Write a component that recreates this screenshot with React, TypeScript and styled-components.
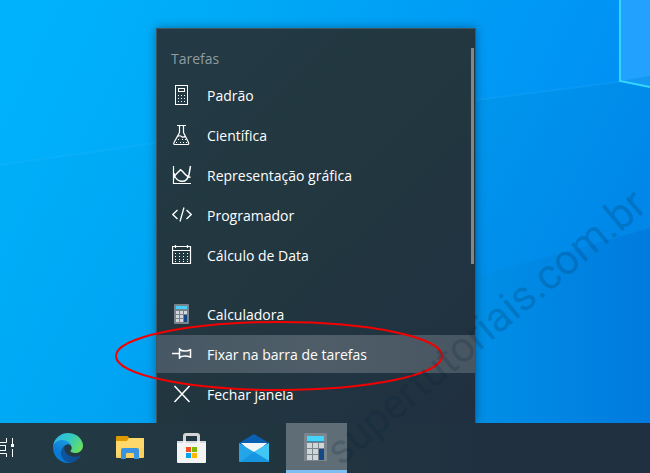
import React from 'react';
import styled, { createGlobalStyle } from 'styled-components';

const GlobalStyle = createGlobalStyle`
  * { box-sizing: border-box; }
  body { margin: 0; overflow: hidden; font-family: "Open Sans", "Noto Sans", sans-serif; }
  ul { list-style: none; margin: 0; padding: 0; }
  svg { display: block; flex: none; }
`;

const Desktop = styled.div`
  position: relative;
  display: flex;
  flex-direction: column;
  min-height: 100vh;
  background: #0093ea;
`;

const Wallpaper = styled.main`
  flex: 1;
  position: relative;
  min-height: 400px;

  > svg {
    position: absolute;
    inset: 0;
    width: 100%;
    height: 100%;
  }
`;

const Taskbar = styled.nav`
  position: relative;
  display: flex;
  gap: 1px;
  height: 50px;
  background: linear-gradient(90deg, #233a45 0%, #21353f 45%, #203040 75%, #202f41 100%);
`;

const TaskSlot = styled.div`
  position: relative;
  display: flex;
`;

const TaskButton = styled.button<{ $active?: boolean; $clipped?: boolean }>`
  display: flex;
  align-items: center;
  justify-content: ${(p) => (p.$clipped ? 'flex-start' : 'center')};
  width: ${(p) => (p.$clipped ? 37 : 61)}px;
  padding: 0 1px 0 0;
  border: 0;
  background: ${(p) => (p.$active ? '#5f6d76' : 'transparent')};
  box-shadow: ${(p) => (p.$active ? 'inset 0 -3px #7dbdf1' : 'none')};
`;

const JumpList = styled.section`
  position: absolute;
  left: -130px;
  bottom: 100%;
  width: 320px;
  padding: 11px 0 10px;
`;

const Panel = styled.div`
  position: absolute;
  inset: 0;
  border: 1px solid #3d5863;
  border-bottom: 0;
  background: linear-gradient(135deg, #233a45 0%, #22373f 45%, #213441 75%, #202f40 100%);
  box-shadow: 0 0 9px rgba(0, 30, 60, 0.45);
  clip-path: inset(-16px -16px 0 -16px);
`;

const Content = styled.div`
  position: relative;
  margin: 1px 1px 0;
`;

const Heading = styled.h2`
  margin: 0;
  padding: 9px 14px 7px;
  font-size: 14px;
  line-height: 20px;
  font-weight: 400;
  color: #8f9ba1;
`;

const Items = styled.ul`
  display: grid;
  gap: 2px;

  & + & { margin-top: 21px; }
`;

const Item = styled.button<{ $hover?: boolean }>`
  display: flex;
  align-items: center;
  gap: 15px;
  width: 100%;
  height: 38px;
  padding: 0 15px;
  border: 0;
  background: ${(p) => (p.$hover ? 'linear-gradient(90deg, #475864, #4e5d67 50%, #485662)' : 'transparent')};
  color: #fff;
  font: 400 14px/20px "Open Sans", "Noto Sans", sans-serif;
  text-align: left;
`;

const Label = styled.span`
  padding-top: 2px;
`;

const Scrollbar = styled.div`
  position: absolute;
  top: 20px;
  right: 2px;
  width: 3px;
  height: 216px;
  background: #858688;
`;

const Highlight = styled.svg`
  position: absolute;
  left: -41px;
  bottom: 31px;
  pointer-events: none;
`;

const Watermark = styled.div`
  position: absolute;
  right: -37px;
  bottom: 121px;
  font: 400 42px/50px Roboto, sans-serif;
  white-space: nowrap;
  color: rgba(0, 35, 60, 0.21);
  transform: rotate(-40deg);
  pointer-events: none;
`;

const dots = (xs: number[], ys: number[]) =>
  ys.flatMap((y) => xs.map((x) => <rect key={`${x}-${y}`} x={x} y={y} width="1" height="1" fill="#fff" />));

const Line = ({ children }: { children: React.ReactNode }) => (
  <svg width="20" height="20" viewBox="0 0 20 20" fill="none" stroke="#fff" aria-hidden="true">{children}</svg>
);

const StandardIcon = () => (
  <Line>
    <rect x="3.5" y=".5" width="12" height="19" />
    <rect x="6.5" y="3.5" width="6" height="3" />
    <g stroke="none">{dots([6, 9, 12], [10, 13, 16])}</g>
  </Line>
);

const FlaskIcon = () => (
  <Line>
    <path d="M5 .5h9M7.500 .5v7L2 17.500q-.8 2 1 2h12.500q1.800 0 1-2L11.500 7.500V.5M5.500 11.500q2.500-1.500 4 0t4-.5" strokeWidth="1.200" />
    <g stroke="none">{dots([6, 10, 13], [14])}{dots([4, 8, 11, 14], [17])}</g>
  </Line>
);

const GraphIcon = () => (
  <Line>
    <path d="M1.500 1v17.500H19" strokeWidth="1.200" />
    <path d="M2 8C3 17.500 14.500 20 17 9.500L18.500 1" strokeWidth="1.500" />
    <path d="M2 13C3 8.500 6 8 8.500 4.700C11 5.500 13.500 12 18.500 12.300" strokeWidth="1.500" />
  </Line>
);

const CodeIcon = () => (
  <Line>
    <path d="M5.500 5 .8 9.500l4.700 4.500M14.500 5l4.700 4.500-4.700 4.500M12 2.500 8 16.500" strokeWidth="1.300" />
  </Line>
);

const CalendarIcon = () => (
  <Line>
    <path d="M.5 1.500h18v17H.5zM.5 5.500h18M3.500 0v3M15.500 0v3" strokeWidth="1.200" />
    <g stroke="none">{dots([3, 7, 11, 15], [8, 11, 14, 16])}</g>
  </Line>
);

const PinIcon = () => (
  <Line>
    <path d="M0 9.500h7M7.500 4v11M7.500 5.500q4 2.500 11 .5v7q-7-2-11 .5M18.500 5v9" strokeWidth="1.500" />
  </Line>
);

const CloseIcon = () => (
  <Line><path d="m2.500 2 15 16m0-16-15 16" strokeWidth="1.500" /></Line>
);

const CalculatorIcon = () => (
  <svg width="24" height="30" viewBox="0 0 24 30" aria-hidden="true">
    <rect width="23" height="30" rx="1.500" fill="#7b858d" />
    <rect y="28" width="23" height="2" rx="1" fill="#606b74" />
    <rect x="3" y="3" width="17" height="5" fill="#45d4fa" />
    <path d="M3 8.500h17" stroke="#348ab0" />
    {[10, 16, 22].flatMap((y) => [3, 9, 15].map((x) => (
      <rect key={`${x}-${y}`} x={x} y={y} width="5" height="5" fill="#d0d5d8" />
    )))}
    <path d="M15 16h5v11h-5z" fill="#124886" />
  </svg>
);

const SmallCalculator = () => (
  <svg width="20" height="20" viewBox="0 0 20 20" aria-hidden="true">
    <rect x="2" width="15" height="20" rx="1" fill="#78838c" />
    <rect x="4" y="2" width="11" height="3" fill="#43d0fa" />
    {[7, 11, 15].flatMap((y) => [4, 8, 12].map((x) => (
      <rect key={`${x}-${y}`} x={x} y={y} width="3" height="3" fill="#d3d8dc" />
    )))}
    <path d="M12 11h3v7h-3z" fill="#124886" />
  </svg>
);

const TaskViewIcon = () => (
  <svg width="14" height="22" viewBox="0 0 14 22" fill="none" stroke="#fff" aria-hidden="true">
    <path d="M0 5.500h6.500V1M0 16.500h6.500V20M5.500 8v6M0 8.500h5.500M0 13.500h5.500M12.500 1v6M12.500 12v8" />
    <rect x="11" y="7" width="3" height="3" fill="#fff" stroke="none" />
  </svg>
);

const EdgeIcon = () => (
  <svg width="30" height="30" viewBox="0 0 256 256" aria-hidden="true">
    <defs>
      <linearGradient id="eb" x1="0" y1="0" x2="1" y2="0">
        <stop offset="0" stopColor="#0c59a4" /><stop offset="1" stopColor="#114a8b" />
      </linearGradient>
      <linearGradient id="em" x1=".7" y1="0" x2=".2" y2="1">
        <stop offset="0" stopColor="#1b9de2" /><stop offset=".6" stopColor="#0d7bd4" /><stop offset="1" stopColor="#0078d7" />
      </linearGradient>
      <linearGradient id="eg" x1="0" y1=".2" x2="1" y2=".7">
        <stop offset="0" stopColor="#2bb6f0" /><stop offset=".5" stopColor="#35c9bd" /><stop offset="1" stopColor="#6be05c" />
      </linearGradient>
    </defs>
    <path d="M231 190.500a94 94 0 0 1-10.500 4.700 102 102 0 0 1-36 6.500c-47.500 0-88.800-32.700-88.800-74.600a31.700 31.700 0 0 1 16.500-27.700c-43 1.800-54 46.600-54 72.800 0 74.200 68.400 81.700 83.100 81.700 8 0 20-2.300 27.200-4.600l1.300-.4a128 128 0 0 0 66.600-52.800 4 4 0 0 0-5.400-5.600z" fill="url(#eb)" />
    <path d="M105.700 241.400a79 79 0 0 1-22.700-21.300 80.700 80.700 0 0 1 29.500-120.700c3.100-1.500 8.500-4.200 15.700-4a32.400 32.400 0 0 1 25.700 13 32 32 0 0 1 6.300 18.700c0-.2 24.500-79.600-80-79.600-43.900 0-80 41.700-80 78.200a130 130 0 0 0 12.100 56 128 128 0 0 0 156.400 67 75.500 75.500 0 0 1-63-7.300z" fill="url(#em)" />
    <path d="M152.300 148.900c-.8 1-3.300 2.500-3.300 5.700 0 2.600 1.700 5.100 4.700 7.200 14.400 10 41.500 8.700 41.600 8.700a59.600 59.600 0 0 0 30.300-8.300A61.400 61.400 0 0 0 256 109.200c.3-22.400-8-37.300-11.300-43.900C223.500 23.900 177.700 0 128 0A128 128 0 0 0 0 126.200c.5-36.500 36.800-66 80-66 3.500 0 23.500.3 42 10a72.600 72.600 0 0 1 31 29.300c6.100 10.600 7.200 24.100 7.200 29.500s-2.700 13.300-7.900 19.900z" fill="url(#eg)" />
  </svg>
);

const FolderIcon = () => (
  <svg width="28" height="24" viewBox="0 0 28 24" aria-hidden="true">
    <path d="M0 1q0-1 1-1h10q1 0 1.500 1L14 3v4H0z" fill="#de9800" />
    <path d="M0 5h11l2-3h14q1 0 1 1v18q0 1-1 1H1q-1 0-1-1z" fill="#ffd05b" />
    <path d="M0 5h11l2-3h15v9L0 20z" fill="#ffdb76" opacity=".65" />
    <path d="M5 23v-9q0-2 2-2h14q2 0 2 2v9h-5v-5q0-1-1-1h-6q-1 0-1 1v5z" fill="#3993de" />
  </svg>
);

const StoreIcon = () => (
  <svg width="30" height="30" viewBox="0 0 30 30" aria-hidden="true">
    <path d="M7.500 11V3q0-1.500 1.500-1.500h11q1.500 0 1.500 1.500v8" fill="none" stroke="#d3d4d5" strokeWidth="3" />
    <path d="M0 8h29v21q0 1-1 1H1q-1 0-1-1z" fill="#f4f4f4" />
    <path d="M0 8h6v2H0zM9 8h11v2H9zM23 8h6v2h-6z" fill="#d8d9da" />
    <path d="M9 14h5v5H9z" fill="#f25022" /><path d="M15 14h5v5h-5z" fill="#7fba00" />
    <path d="M9 20h5v5H9z" fill="#00a4ef" /><path d="M15 20h5v5h-5z" fill="#ffb900" />
  </svg>
);

const MailIcon = () => (
  <svg width="30" height="28" viewBox="0 0 30 28" aria-hidden="true">
    <path d="m0 9 15-9 15 9v6H0z" fill="#0b5fb0" />
    <path d="M2 9h26L15 21z" fill="#f3f5f7" />
    <path d="M0 9v18q0 1 1 1h28l1-1V9L15 18z" fill="#24a5ea" />
    <path d="M30 9v18L15 18z" fill="#41c7f4" />
    <path d="m15 18 15 9v1H1z" fill="#1795e0" />
  </svg>
);

const Scenery = () => (
  <svg viewBox="0 0 650 423" preserveAspectRatio="none" aria-hidden="true">
    <defs>
      <linearGradient id="sky" x1="0" y1=".3" x2="1" y2=".6">
        <stop offset="0" stopColor="#00b1fb" />
        <stop offset=".3" stopColor="#00a8f6" />
        <stop offset=".65" stopColor="#0099f5" />
        <stop offset="1" stopColor="#008bf2" />
      </linearGradient>
      <linearGradient id="low" x1="0" y1="0" x2="1" y2=".3">
        <stop offset="0" stopColor="#00aff8" stopOpacity=".7" />
        <stop offset=".3" stopColor="#00a8f3" stopOpacity=".8" />
        <stop offset=".7" stopColor="#0096ed" stopOpacity=".9" />
        <stop offset="1" stopColor="#0087e8" />
      </linearGradient>
      <linearGradient id="deep" x1="0" y1="0" x2="1" y2="0">
        <stop offset="0" stopColor="#008fe7" /><stop offset="1" stopColor="#007bde" />
      </linearGradient>
    </defs>
    <path d="M0 0h650v423H0z" fill="url(#sky)" />
    <path d="M0 165 156 143 476 100 650 78v345H0z" fill="url(#low)" />
    <path d="M476 277 650 228v195H476z" fill="url(#deep)" />
    <path d="M0 165 156 143 476 100 650 78" fill="none" stroke="#46c4ff" strokeOpacity=".12" strokeWidth="2" />
    <path d="M619 0h31v87l-31-6z" fill="#22a1ff" />
    <path d="m621 81 29-5v10z" fill="#1399f2" />
    <path d="M620 0v81l30 6" fill="none" stroke="#35d6fc" strokeWidth="2" />
  </svg>
);

const tasks = [
  { label: 'Padrão', icon: <StandardIcon /> },
  { label: 'Científica', icon: <FlaskIcon /> },
  { label: 'Representação gráfica', icon: <GraphIcon /> },
  { label: 'Programador', icon: <CodeIcon /> },
  { label: 'Cálculo de Data', icon: <CalendarIcon /> },
];

const actions = [
  { label: 'Calculadora', icon: <SmallCalculator /> },
  { label: 'Fixar na barra de tarefas', icon: <PinIcon />, hover: true },
  { label: 'Fechar janela', icon: <CloseIcon /> },
];

const pinned = [
  { label: 'Microsoft Edge', icon: <EdgeIcon /> },
  { label: 'Explorador de Arquivos', icon: <FolderIcon /> },
  { label: 'Microsoft Store', icon: <StoreIcon /> },
  { label: 'Email', icon: <MailIcon /> },
];

export default function App() {
  return (
    <>
      <GlobalStyle />
      <Desktop>
        <Wallpaper><Scenery /></Wallpaper>
        <Taskbar>
          <TaskButton $clipped aria-label="Visão de Tarefas"><TaskViewIcon /></TaskButton>
          {pinned.map((p) => (
            <TaskButton key={p.label} aria-label={p.label}>{p.icon}</TaskButton>
          ))}
          <TaskSlot>
            <TaskButton $active aria-label="Calculadora"><CalculatorIcon /></TaskButton>
            <JumpList>
              <Panel />
              <Content>
                <Heading>Tarefas</Heading>
                <Items>
                  {tasks.map((t) => (
                    <li key={t.label}><Item>{t.icon}<Label>{t.label}</Label></Item></li>
                  ))}
                </Items>
                <Items>
                  {actions.map((a) => (
                    <li key={a.label}><Item $hover={a.hover}>{a.icon}<Label>{a.label}</Label></Item></li>
                  ))}
                </Items>
              </Content>
              <Scrollbar />
              <Highlight width="330" height="72" viewBox="0 0 330 72" aria-hidden="true">
                <ellipse cx="164" cy="36" rx="163" ry="34" fill="none" stroke="#f40000" strokeWidth="2" />
              </Highlight>
            </JumpList>
          </TaskSlot>
        </Taskbar>
        <Watermark>supertutoriais.com.br</Watermark>
      </Desktop>
    </>
  );
}
